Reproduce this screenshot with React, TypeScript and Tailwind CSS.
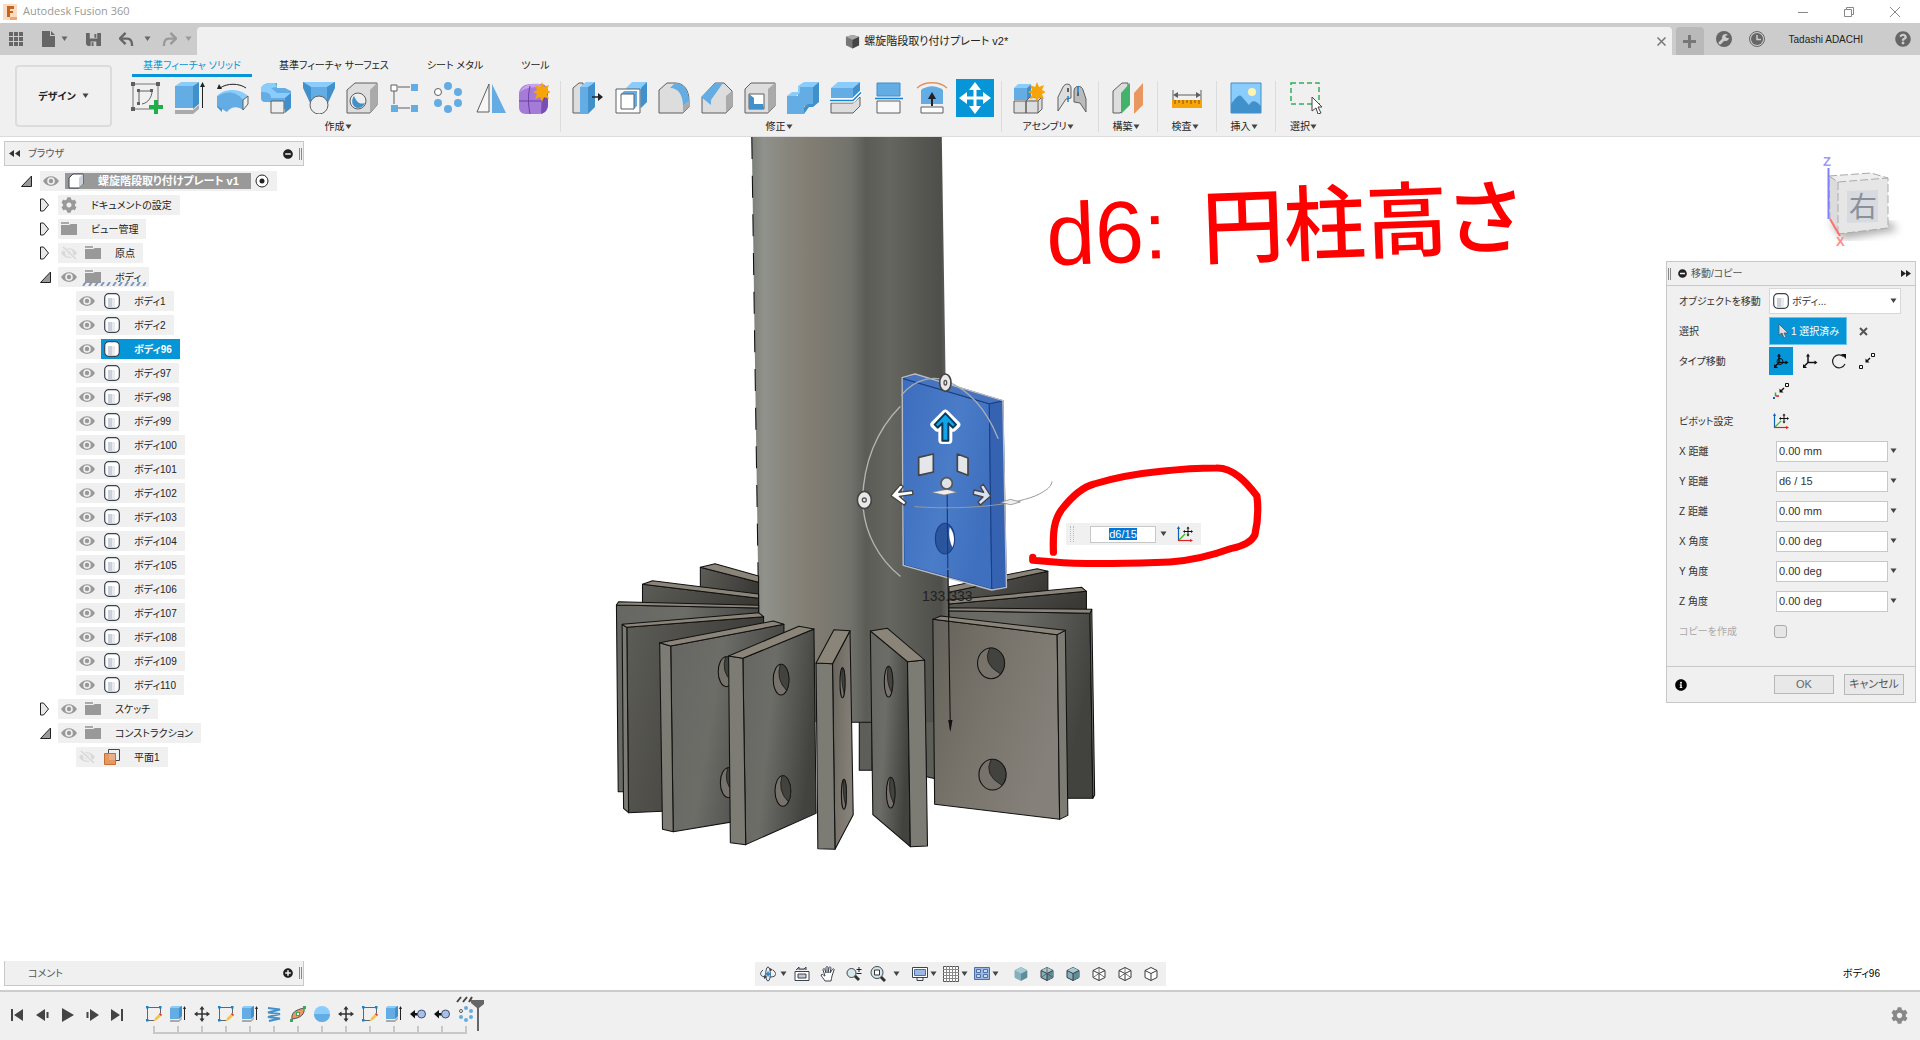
import React, { useEffect, useRef, useState } from 'react';
import { FaCog, FaInfoCircle, FaMinusCircle, FaPlusCircle, FaQuestionCircle } from 'react-icons/fa';

const BLUE = '#64ace4';
const LIGHT = '#8accfc';
const DARK = '#4090cc';
const LINE = '#5f5f5f';

function Svg({ children, size = 32, box = 32 }: { children: React.ReactNode; size?: number; box?: number }) {
  return (
    <svg width={size} height={size} viewBox={`0 0 ${box} ${box}`} fill="none" className="shrink-0" aria-hidden="true">
      {children}
    </svg>
  );
}

function Caret({ className = 'text-[#444]' }: { className?: string }) {
  return (
    <svg width="7" height="6" viewBox="0 0 7 6" className={`shrink-0 ${className}`} aria-hidden="true">
      <path d="M0.500 0.500h6L3.500 5z" fill="currentColor" />
    </svg>
  );
}

/* ---------- ribbon icons ---------- */

const createIcons = [
  {
    label: 'スケッチを作成',
    icon: (
      <Svg>
        <path d="M2 2h25v25H2z" stroke="#777" />
        <path d="M8 22V9h13M21 9c0 6-4 12-10 13" stroke={LINE} />
        <path d="M0 0h4v4H0zM25 0h4v4h-4zM0 25h4v4H0zM6 7h3v3H6zM19 7h3v3h-3zM6 20h3v3H6z" fill={LINE} />
        <path d="M23 18h4v5h5v4h-5v5h-4v-5h-5v-4h5z" fill="#1fae4a" />
      </Svg>
    ),
  },
  {
    label: '押し出し',
    icon: (
      <Svg>
        <path d="M1 4h18v22H1z" fill={BLUE} />
        <path d="M1 4l6-4h18l-6 4z" fill={LIGHT} />
        <path d="M19 4l6-4v22l-6 5z" fill={DARK} />
        <path d="M1 28h18l6-5v4l-6 5H1z" fill="#aaa" />
        <path d="M28.500 26V4" stroke="#222" />
        <path d="M26 5l2.500-5L31 5z" fill="#222" />
      </Svg>
    ),
  },
  {
    label: '回転',
    icon: (
      <Svg>
        <path d="M0 14c7-8 23-8 31 0l-5 5c-6-5-15-5-21 0z" fill={LIGHT} />
        <path d="M0 14l5 5v11l-5-5z" fill={DARK} />
        <path d="M0 15c8-7 20-6 26 3v10c-5-4-12-4-16 2L0 24z" fill={BLUE} />
        <path d="M26 18l5-4v8l-5 6z" fill="#eee" stroke={LINE} />
        <path d="M3 6c7-5 19-5 26 0" stroke="#222" />
        <path d="M0 7l2-5 3 5z" fill="#222" />
      </Svg>
    ),
  },
  {
    label: 'スイープ',
    icon: (
      <Svg>
        <path d="M1 7C2 2 7 1 12 1l5 0v5h8l6 3v14l-5 4H11v-7H5c-3 0-4-2-4-4z" fill={BLUE} />
        <path d="M1 6C3 1 8 1 15 1l2 4-6 1 6 5h14l-6 5H11c0-5-4-6-10-6z" fill={LIGHT} />
        <path d="M25 16l6-5v15l-6 5z" fill={DARK} />
        <path d="M11 19h13v12H11z" fill="#eee" stroke={LINE} />
      </Svg>
    ),
  },
  {
    label: 'ロフト',
    icon: (
      <Svg>
        <path d="M0 0h32v2L23 21H9L0 2z" fill={BLUE} />
        <path d="M0 0h32l-8 5H8z" fill={LIGHT} />
        <path d="M32 0v6l-8 17V5z" fill={DARK} />
        <path d="M0 0l8 5v18L0 6z" fill={DARK} />
        <circle cx="16" cy="23" r="9" fill="#eee" stroke={LINE} />
      </Svg>
    ),
  },
  {
    label: '穴',
    icon: (
      <Svg>
        <path d="M1 8l8-7h22v22l-7 8H1z" fill="#ddd" stroke={LINE} />
        <path d="M24 8l7-7v22l-7 8z" fill="#aaa" />
        <circle cx="12" cy="19" r="8" fill="#eee" stroke={LINE} />
        <path d="M8 14c3 6 5 9 11 7-2 5-7 6-10 4s-4-7-1-11z" fill={DARK} />
      </Svg>
    ),
  },
  {
    label: '矩形状パターン',
    icon: (
      <Svg>
        <path d="M9 5h12M5 9v13M9 26h12" stroke={LINE} />
        <path d="M2 3h6v6H2z" fill="#fff" stroke={LINE} />
        <path d="M22 2h7v7h-7zM2 23h7v7H2zM22 23h7v7h-7z" fill={BLUE} />
      </Svg>
    ),
  },
  {
    label: '円形状パターン',
    icon: (
      <Svg>
        <g fill={BLUE}>
          <circle cx="16" cy="4" r="4" />
          <circle cx="26" cy="10" r="4" />
          <circle cx="26" cy="21" r="4" />
          <circle cx="16" cy="27" r="4" />
          <circle cx="6" cy="21" r="4" />
        </g>
        <circle cx="6" cy="10" r="3.500" fill="#fff" stroke={LINE} />
      </Svg>
    ),
  },
  {
    label: 'ミラー',
    icon: (
      <Svg>
        <path d="M14 2v28H2z" stroke={LINE} fill="#f6f6f6" />
        <path d="M17 2l14 29H17z" fill={BLUE} />
      </Svg>
    ),
  },
  {
    label: 'フォームを作成',
    icon: (
      <Svg>
        <path d="M1 12C1 6 6 2 13 2h10c4 0 7 3 7 8v12c0 6-4 10-9 10H8c-5 0-7-3-7-7z" fill="#a57bd8" />
        <path d="M24 7c3-2 6 0 6 4v11c0 6-3 9-7 10z" fill="#7a4fb5" />
        <path d="M2 10c3-7 10-9 20-8l3 5c-7-3-17-2-23 3z" fill="#c7a5ee" />
        <path d="M12 4c-2 9-2 18 0 28M1 19h23l6-4" stroke="#6a3fa5" />
        <path d="M24 0l2 5 5-2-2 5 4 2-4 2 2 5-5-2-2 5-2-5-5 2 2-5-4-2 4-2-2-5 5 2z" fill="#f7a30a" />
      </Svg>
    ),
  },
];

const modifyIcons = [
  {
    label: 'プレス/プル',
    icon: (
      <Svg>
        <path d="M1 6l6-5h4v30H1z" fill="#ddd" stroke={LINE} />
        <path d="M8 5h8v27H8z" fill={BLUE} />
        <path d="M8 5l6-5h9l-7 5z" fill={LIGHT} />
        <path d="M16 5l7-5v25l-7 7z" fill={DARK} />
        <path d="M20 15h8" stroke="#222" strokeWidth="1.500" />
        <path d="M26 11l5 4-5 4z" fill="#222" />
      </Svg>
    ),
  },
  {
    label: 'オフセット',
    icon: (
      <Svg>
        <path d="M11 6l6-6h15v19l-7 7" fill={LIGHT} />
        <path d="M26 6l6-6v20l-6 6z" fill={DARK} />
        <path d="M1 7h24v24H1z" fill="#fff" stroke={LINE} />
        <path d="M6 12l3-3h13v15l-3 3z" fill={BLUE} />
        <path d="M6 12h13v15H6z" fill="#fff" stroke={LINE} />
      </Svg>
    ),
  },
  {
    label: 'フィレット',
    icon: (
      <Svg>
        <path d="M1 8l8-7h8c9 0 14 7 14 18v6l-6 6H1z" fill="#ddd" stroke={LINE} />
        <path d="M12 6l5-5c9 0 14 8 14 18l-6 5C25 14 21 6 12 6z" fill={BLUE} />
        <path d="M25 24l6-5v6l-6 6z" fill="#aaa" />
      </Svg>
    ),
  },
  {
    label: '面取り',
    icon: (
      <Svg>
        <path d="M1 15L14 1h9l8 8v16l-6 6H1z" fill="#ddd" stroke={LINE} />
        <path d="M25 14l6-5v16l-6 6z" fill="#aaa" />
        <path d="M0 15L14 1h8L10 18v5z" fill={BLUE} />
      </Svg>
    ),
  },
  {
    label: 'シェル',
    icon: (
      <Svg>
        <path d="M1 7l6-6h24v23l-7 7H1z" fill="#ddd" stroke={LINE} />
        <path d="M24 7l7-6v23l-7 7z" fill="#aaa" />
        <path d="M5 12h15v15H5z" fill="#fff" stroke={LINE} />
        <path d="M5 12l5 4v6h9l1 5H5z" fill={DARK} />
      </Svg>
    ),
  },
  {
    label: '結合',
    icon: (
      <Svg>
        <path d="M0 14h11V4h15v20h-9v8H0z" fill={BLUE} />
        <path d="M0 14l5-4h6V4l6-4h15l-6 5H13v6l-4 3z" fill={LIGHT} />
        <path d="M26 5l6-5v20l-6 5h-4l-5 7V25l4-3h5z" fill={DARK} />
      </Svg>
    ),
  },
  {
    label: '面を分割',
    icon: (
      <Svg>
        <path d="M1 6h22v10H1z" fill={BLUE} />
        <path d="M1 6l7-6h22l-7 6z" fill={LIGHT} />
        <path d="M23 6l7-6v10l-7 6z" fill={DARK} />
        <path d="M1 21h22l7-6v9l-7 7H1z" fill="#ddd" stroke={LINE} />
        <path d="M0 18.500h23l8-8" stroke="#fff" strokeWidth="4" />
        <path d="M0 18.500h23l8-8" stroke="#1584d3" strokeWidth="1.500" />
      </Svg>
    ),
  },
  {
    label: 'ボディを分割',
    icon: (
      <Svg>
        <path d="M4 1h23v13H4z" fill={BLUE} stroke={DARK} />
        <path d="M2 16.500h28" stroke="#1584d3" strokeWidth="1.500" />
        <path d="M4 19h23v12H4z" fill="#f8f8f8" stroke={LINE} />
      </Svg>
    ),
  },
  {
    label: '面を置換',
    icon: (
      <Svg>
        <path d="M1 6C9-1 23-1 31 6" stroke="#e2935c" strokeWidth="1.500" />
        <path d="M5 8c7-5 15-5 22 0v14H5z" fill={BLUE} />
        <path d="M5 25h22v6H5z" fill="#fff" stroke={LINE} />
        <path d="M16 24V15" stroke="#222" strokeWidth="2" />
        <path d="M12 17l4-7 4 7z" fill="#222" />
      </Svg>
    ),
  },
  {
    label: '移動/コピー',
    active: true,
    icon: (
      <Svg>
        <path d="M16 3v26M3 16h26" stroke="#fff" strokeWidth="3" />
        <path d="M16 0l6 8H10zM16 32l-6-8h12zM0 16l8-6v12zM32 16l-8 6V10z" fill="#fff" />
      </Svg>
    ),
  },
];

const assembleIcons = [
  {
    label: '新規コンポーネント',
    icon: (
      <Svg>
        <path d="M1 6h13v12H1z" fill={BLUE} />
        <path d="M1 6l4-4h13l-4 4z" fill={LIGHT} />
        <path d="M14 6l4-4v12l-4 4z" fill={DARK} />
        <path d="M1 19h12v12H1zM13 19l4-4h12v12l-4 4H13z" fill="#ddd" stroke={LINE} />
        <path d="M13 19h12v12M25 19l4-4" stroke={LINE} />
        <path d="M24 0l2 5 5-2-2 5 4 2-4 2 2 5-5-2-2 5-2-5-5 2 2-5-4-2 4-2-2-5 5 2z" fill="#f7a30a" />
      </Svg>
    ),
  },
  {
    label: 'ジョイント',
    icon: (
      <Svg>
        <path d="M2 15L7 5c2-4 8-4 8 1v10l-5 1-8 12z" fill="#ddd" stroke={LINE} />
        <path d="M18 9c0-6 8-6 9-1l3 9v13l-6-9-6-1z" fill="#bbb" stroke={LINE} />
        <path d="M12 6v4M22 10v4" stroke={LINE} strokeWidth="2" />
        <path d="M12 14v6M22 4v8" stroke="#1584d3" strokeWidth="1.500" />
      </Svg>
    ),
  },
];

const constructIcon = (
  <Svg>
    <path d="M1 9l9-8h6v22l-8 8H1z" fill="#ddd" stroke={LINE} />
    <path d="M9 11l9-10v22l-9 9z" fill="#43b36c" />
    <path d="M22 11l9-10v22l-9 9z" fill="#e8975f" />
  </Svg>
);

const inspectIcon = (
  <Svg>
    <path d="M2 8v10M30 8v10M4 13h24" stroke={LINE} />
    <path d="M2 13l5-3v6zM30 13l-5-3v6z" fill={LINE} />
    <path d="M1 18h30v8H1z" fill="#f7a30a" />
    <path d="M4 18v4M8 18v3M12 18v4M16 18v3M20 18v4M24 18v3M28 18v4" stroke="#805000" />
  </Svg>
);

const insertIcon = (
  <Svg>
    <path d="M1 1h30v30H1z" fill={LIGHT} stroke={DARK} />
    <path d="M1 22c5-6 8-11 11-7l7 8c3-4 5-6 12 1v7H1z" fill={DARK} />
    <circle cx="22" cy="10" r="4" fill="#fdf3b0" />
  </Svg>
);

const selectIcon = (
  <Svg>
    <path d="M1 1h28v21H1z" stroke="#2fae57" strokeWidth="1.500" strokeDasharray="5 3" />
    <path d="M22 15v14l4-3 2 6 3-1-3-6h4z" fill="#fff" stroke="#444" />
  </Svg>
);

interface Tool {
  label: string;
  icon: React.ReactNode;
  active?: boolean;
}

const groups: { name: string; tools: Tool[] }[] = [
  { name: '作成', tools: createIcons },
  { name: '修正', tools: modifyIcons },
  { name: 'アセンブリ', tools: assembleIcons },
  { name: '構築', tools: [{ label: 'オフセット平面', icon: constructIcon }] },
  { name: '検査', tools: [{ label: '計測', icon: inspectIcon }] },
  { name: '挿入', tools: [{ label: '画像', icon: insertIcon }] },
  { name: '選択', tools: [{ label: '窓選択', icon: selectIcon }] },
];

const tabs = ['基準フィーチャ ソリッド', '基準フィーチャ サーフェス', 'シート メタル', 'ツール'];

/* ---------- browser tree icons ---------- */

function Eye({ off = false }: { off?: boolean }) {
  return (
    <Svg size={16} box={16}>
      <g opacity={off ? 0.25 : 1}>
        <path d="M0 8c4-6.500 12-6.500 16 0-4 6.500-12 6.500-16 0z" fill="#999" />
        <circle cx="8" cy="8" r="3.800" fill="#f0f0f0" />
        <circle cx="8" cy="8" r="2.200" fill="#999" />
      </g>
      {off && <path d="M1 2l14 12" stroke="#f0f0f0" strokeWidth="3" />}
      {off && <path d="M2 2l13 12" stroke="#d8d8d8" strokeWidth="1.500" />}
    </Svg>
  );
}

function Cylinder() {
  return (
    <Svg size={16} box={16}>
      <rect x="0.700" y="0.700" width="14.600" height="14.600" rx="4" fill="#fff" stroke="#3c4350" strokeWidth="1.200" />
      <path d="M4 5h4v9H4z" fill="#ccd0d8" />
      <path d="M8 5h3v9H8z" fill="#e8eaee" />
    </Svg>
  );
}

function Folder() {
  return (
    <Svg size={16} box={16}>
      <path d="M0 1h8v2H0z" fill="#aaa" />
      <path d="M0 4h8l2-1h6v11H0z" fill="#999" />
    </Svg>
  );
}

function Twisty({ open }: { open: boolean }) {
  return (
    <Svg size={14} box={14}>
      {open ? (
        <path d="M10.500 2v10.500H0.500z" fill="#999" stroke="#222" />
      ) : (
        <path d="M0.500 1h3l5 6-5 6h-3z" fill="#e8e8e8" stroke="#222" />
      )}
    </Svg>
  );
}

function TreeFolder({ label, open = false, hidden = false, eye = true, gear = false, active = false }: {
  label: string;
  open?: boolean;
  hidden?: boolean;
  eye?: boolean;
  gear?: boolean;
  active?: boolean;
}) {
  return (
    <li className="flex h-5 items-center pl-9">
      <button aria-label={`${label} を展開`} className="w-[18px]">
        <Twisty open={open} />
      </button>
      <div className="relative flex h-5 items-center bg-[#f0f0f0] pl-[3px] pr-2">
        {eye && (
          <button aria-label="表示" className="mr-2">
            <Eye off={hidden} />
          </button>
        )}
        {gear ? <FaCog size={16} color="#999" /> : <Folder />}
        <span className="ml-3.5">{label}</span>
        {active && (
          <svg className="absolute bottom-px left-6 w-16" height="4" viewBox="0 0 64 4" aria-hidden="true">
            <path d="M1 4l3-4M7 4l3-4M13 4l3-4M19 4l3-4M25 4l3-4M31 4l3-4M37 4l3-4M43 4l3-4M49 4l3-4M55 4l3-4M61 4l3-4" stroke="#7f95b8" strokeWidth="2" />
          </svg>
        )}
      </div>
    </li>
  );
}

const bodies = [1, 2, 96, 97, 98, 99, 100, 101, 102, 103, 104, 105, 106, 107, 108, 109, 110];

function Browser() {
  const [selected, setSelected] = useState(96);

  return (
    <aside className="w-[300px] text-[10px] text-[#222]">
      <div className="flex h-[25px] items-center border border-[#c8c8c8] bg-[#f0f0f0] pl-1 pr-px">
        <svg width="11" height="7" viewBox="0 0 11 7" aria-hidden="true">
          <path d="M5 0v7L0 3.500zM11 0v7L6 3.500z" fill="#333" />
        </svg>
        <h2 className="ml-2 text-[#555]">ブラウザ</h2>
        <button aria-label="最小化" className="ml-auto">
          <FaMinusCircle size={10} color="#222" />
        </button>
        <span className="ml-1.5 h-3 w-[3px] border-x border-[#888]" />
      </div>

      <ul className="mt-[5px] space-y-1">
        <li className="flex h-5 items-center pl-[17px]">
          <button aria-label="展開" className="w-[19px]">
            <Twisty open />
          </button>
          <div className="flex h-5 items-center bg-[#f0f0f0] pl-[3px] pr-2">
            <Eye />
            <div className="ml-1.5 flex h-4 items-center bg-[#999] pl-[3px] pr-3 text-[11px] font-bold text-white">
              <Svg size={16} box={16}>
                <path d="M1 5l4-4h10v10l-4 4H1z" fill="#fff" stroke="#3c4350" strokeLinejoin="round" />
                <path d="M11 5l4-4v10l-4 4z" fill="#ccd0d8" />
              </Svg>
              <span className="ml-3.5">螺旋階段取り付けプレート v1</span>
            </div>
            <span className="ml-1">
              <Svg size={14} box={14}>
                <circle cx="7" cy="7" r="6" stroke="#222" fill="#fff" />
                <circle cx="7" cy="7" r="2.500" fill="#222" />
              </Svg>
            </span>
          </div>
        </li>
        <TreeFolder label="ドキュメントの設定" eye={false} gear />
        <TreeFolder label="ビュー管理" eye={false} />
        <TreeFolder label="原点" hidden />
        <TreeFolder label="ボディ" open active />
        {bodies.map((n) => (
          <li key={n} className="flex h-5 items-center pl-[72px]">
            <button aria-label="表示" className="flex h-5 items-center bg-[#f0f0f0] pl-[3px] pr-1.5">
              <Eye />
            </button>
            <button
              onClick={() => setSelected(n)}
              className={`flex h-5 items-center pl-[3px] pr-2 ${
                n === selected ? 'bg-[#0696d7] font-bold text-white' : 'bg-[#f0f0f0]'
              }`}
            >
              <Cylinder />
              <span className="ml-3.5">ボディ{n}</span>
            </button>
          </li>
        ))}
        <TreeFolder label="スケッチ" />
        <TreeFolder label="コンストラクション" open />
        <li className="flex h-5 items-center pl-[72px]">
          <div className="flex h-5 items-center bg-[#f0f0f0] pl-[3px] pr-2">
            <Eye off />
            <span className="ml-[9px]">
              <Svg size={16} box={16}>
                <path d="M4.500 5V0.500h11v11H12" stroke="#444" />
                <path d="M0.500 4.500h11v11h-11z" fill="#e8975f" stroke="#c56f35" />
                <path d="M5 5h6v6H5z" fill="#e0b090" />
              </Svg>
            </span>
            <span className="ml-3.5">平面1</span>
          </div>
        </li>
      </ul>
    </aside>
  );
}

/* ---------- move / copy dialog ---------- */

function PivotIcon() {
  return (
    <Svg size={16} box={16}>
      <path d="M1.500 1v14" stroke="#0a62b5" strokeWidth="1.200" />
      <path d="M1 14.500h14" stroke="#e02020" strokeWidth="1.200" />
      <path d="M2 14l6-6" stroke="#30b820" strokeWidth="1.200" />
      <path d="M0 3l1.500-3L3 3z" fill="#0a62b5" />
      <path d="M13 13l3 1.500-3 1.500z" fill="#e02020" />
      <path d="M11 2v7M7.500 5.500h7" stroke="#111" />
      <path d="M11 0.500l1.500 2h-3zM11 10.500l-1.500-2h3zM6 5.500L8 4v3zM16 5.500L14 7V4z" fill="#111" />
    </Svg>
  );
}

function AxesIcon({ ring = false }: { ring?: boolean }) {
  return (
    <Svg size={16} box={16}>
      <path d="M6 9.500V2M6 9.500h8M6 9.500L2 13.500" stroke="#111" strokeWidth="1.500" />
      <path d="M4 3.500L6 0.500l2 3zM12.500 7.500l3 2-3 2zM1 11v4h4z" fill="#111" />
      {ring && <ellipse cx="7" cy="8.500" rx="3" ry="3" stroke="#111" />}
    </Svg>
  );
}

function PointsIcon({ small = false }: { small?: boolean }) {
  return (
    <Svg size={16} box={16}>
      <path d="M12.500 0.500h3v3h-3z" stroke="#111" fill="#fff" />
      <path d="M11 5L8 8" stroke="#111" strokeWidth="1.500" />
      <path d="M6.500 5.500v4h4z" fill="#111" />
      {small ? (
        <>
          <path d="M2.500 13V9.500" stroke="#30b820" strokeWidth="1.500" />
          <path d="M2.500 13H6" stroke="#e02020" strokeWidth="1.500" />
          <path d="M0 14h2v2H0z" fill="#0a62b5" />
        </>
      ) : (
        <path d="M0.500 12.500h3v3h-3z" stroke="#111" fill="#fff" />
      )}
    </Svg>
  );
}

const fields = [
  { id: 'x-distance', label: 'X 距離', value: '0.00 mm' },
  { id: 'y-distance', label: 'Y 距離', value: 'd6 / 15' },
  { id: 'z-distance', label: 'Z 距離', value: '0.00 mm' },
  { id: 'x-angle', label: 'X 角度', value: '0.00 deg' },
  { id: 'y-angle', label: 'Y 角度', value: '0.00 deg' },
  { id: 'z-angle', label: 'Z 角度', value: '0.00 deg' },
];

function MoveDialog() {
  return (
    <section className="w-[250px] border border-[#c8c8c8] bg-[#f0f0f0] text-[10px] text-[#333]">
      <div className="flex h-6 items-center border-b border-[#c8c8c8] pl-px pr-1">
        <span className="mr-[7px] h-3 w-[3px] border-x border-[#888]" />
        <FaMinusCircle size={9} color="#222" />
        <h2 className="ml-1 text-[#555]">移動/コピー</h2>
        <svg className="ml-auto" width="10" height="7" viewBox="0 0 10 7" aria-hidden="true">
          <path d="M0 0v7l5-3.500zM5 0v7l5-3.500z" fill="#222" />
        </svg>
      </div>

      <div className="pb-5 pl-3">
        <div className="flex h-[30px] items-center">
          <label htmlFor="target" className="w-[90px]">オブジェクトを移動</label>
          <div className="relative">
            <select id="target" className="h-[26px] w-[132px] appearance-none border border-[#d8d8d8] bg-white pl-[22px] outline-none">
              <option>ボディ...</option>
            </select>
            <span className="pointer-events-none absolute left-1 top-[5px]">
              <Cylinder />
            </span>
            <Caret className="pointer-events-none absolute right-1 top-2.5 text-[#444]" />
          </div>
        </div>
        <div className="flex h-[30px] items-center">
          <span className="w-[90px]">選択</span>
          <button className="flex h-7 w-[78px] items-center border border-[#6bc4ee] bg-[#0696d7] pl-[7px] text-white">
            <Svg size={14} box={14}>
              <path d="M2 0v11l3-2 2 5 2-1-2-4h4z" fill="#ddd" stroke="#555" strokeWidth="0.800" />
            </Svg>
            <span className="whitespace-nowrap">1 選択済み</span>
          </button>
          <button aria-label="選択解除" className="ml-3">
            <Svg size={9} box={9}>
              <path d="M1 1l7 7M8 1L1 8" stroke="#555" strokeWidth="2" />
            </Svg>
          </button>
        </div>
        <div className="flex h-[30px] items-center">
          <span className="w-[90px]">タイプ移動</span>
          <button aria-label="自由移動" className="flex h-7 w-6 items-center justify-center bg-[#0696d7]">
            <AxesIcon ring />
          </button>
          <button aria-label="移動" className="ml-[9px]"><AxesIcon /></button>
          <button aria-label="回転" className="ml-[13px]">
            <Svg size={16} box={16}>
              <path d="M12.500 3.500A6.500 6.500 0 1 0 14 11" stroke="#222" strokeWidth="1.200" />
              <path d="M10 1h5v5z" fill="#111" />
            </Svg>
          </button>
          <button aria-label="点から点へ" className="ml-3"><PointsIcon /></button>
        </div>
        <div className="flex h-[30px] items-center pl-[94px]">
          <button aria-label="点から位置へ"><PointsIcon small /></button>
        </div>
        <div className="flex h-[30px] items-center">
          <span className="w-[94px]">ピボット設定</span>
          <button aria-label="ピボット設定"><PivotIcon /></button>
        </div>
        {fields.map((field) => (
          <div key={field.id} className="flex h-[30px] items-center">
            <label htmlFor={field.id} className="w-[97px]">{field.label}</label>
            <input
              id={field.id}
              type="text"
              defaultValue={field.value}
              className="h-[21px] w-28 border border-[#c8c8c8] bg-white px-0.5 text-[11px] outline-none"
            />
            <Caret className="ml-0.5 text-[#444]" />
          </div>
        ))}
        <div className="flex h-[30px] items-center">
          <label htmlFor="copy" className="w-[95px] text-[#aaa]">コピーを作成</label>
          <input
            id="copy"
            type="checkbox"
            disabled
            className="h-[13px] w-[13px] appearance-none rounded-[3px] border border-[#aaa] bg-[#e6e6e6]"
          />
        </div>
      </div>

      <div className="flex h-9 items-center border-t border-[#c8c8c8] pl-2 pr-[11px]">
        <FaInfoCircle size={12} color="#000" />
        <button className="ml-auto h-[19px] w-[60px] border border-[#b8b8b8] bg-[#e8e8e8] text-[11px] leading-none text-[#666]">OK</button>
        <button className="ml-2.5 h-[21px] w-[60px] border border-[#b8b8b8] bg-[#e8e8e8] text-[11px] leading-none text-[#555]">キャンセル</button>
      </div>
    </section>
  );
}

/* ---------- 3D scene ---------- */

interface Plate {
  face: string;
  side?: string;
  top: string;
  fill: string;
  holes?: number[][];
}

// painted back to front
const plates: Plate[] = [
  { face: '337,682 500,727 500,820 337,820', top: '337,682 378,671 500,708 500,727', fill: 'url(#dark)' },
  { face: '175,733 500,775 500,850 175,850', top: '175,733 203,722 500,762 500,775', fill: 'url(#dark)' },
  { face: '102,795 500,804 500,1300 120,1355 107,1355', top: '102,795 108,785 500,796 500,804', fill: 'url(#plate)' },
  { face: '131,862 514,830 514,1400 136,1418', side: '118,853 131,862 136,1418 122,1405', top: '118,853 500,818 514,830 131,862', fill: 'url(#dark)' },
  { face: '254,918 571,853 571,1420 261,1475', side: '223,908 254,918 261,1475 231,1468', top: '223,908 541,843 571,853 254,918', fill: 'url(#plate)', holes: [[410, 995, 23, 45], [416, 1328, 23, 45]] },
  { face: '456,955 655,867 661,1420 464,1514', side: '416,948 456,955 464,1514 421,1508', top: '416,948 613,859 655,867 456,955', fill: 'url(#plate)', holes: [[563, 1019, 22, 46], [568, 1353, 22, 46]] },
  { face: '707,971 756,872 765,1424 714,1528', side: '661,969 707,971 714,1528 666,1526', top: '661,969 711,869 756,872 707,971', fill: 'url(#warm)', holes: [[735, 1028, 7, 45], [739, 1363, 7, 45]] },
  { face: '813,873 917,965 925,1520 820,1424', side: '917,965 965,960 973,1518 925,1520', top: '813,873 861,865 965,960 917,965', fill: 'url(#plate)', holes: [[864, 1025, 12, 46], [870, 1358, 12, 46]] },
  { face: '1033,757 1310,694 1310,790 1033,820', top: '1033,740 1280,686 1310,694 1033,757', fill: 'url(#dark)' },
  { face: '1033,792 1418,754 1418,830 1033,830', top: '1033,780 1405,742 1418,754 1033,792', fill: 'url(#dark)' },
  { face: '1033,812 1428,820 1436,1375 1040,1375', side: '1428,820 1433,808 1441,1365 1436,1375', top: '1033,803 1433,808 1428,820 1033,812', fill: 'url(#plate)' },
  { face: '988,838 1336,884 1343,1438 993,1393', side: '1336,884 1359,871 1366,1426 1343,1438', top: '988,838 1010,828 1359,871 1336,884', fill: 'url(#warm)', holes: [[1151, 970, 38, 46], [1155, 1304, 38, 46]] },
];

function Scene() {
  return (
    <svg className="pointer-events-none absolute left-[600px] top-0" width="700" height="853" viewBox="600 137 700 853" aria-hidden="true">
      <defs>
        <linearGradient id="tube">
          <stop offset="0" stopColor="#7d7f79" />
          <stop offset="0.060" stopColor="#90928b" />
          <stop offset="0.180" stopColor="#87867d" />
          <stop offset="0.300" stopColor="#827d73" />
          <stop offset="0.500" stopColor="#72726c" />
          <stop offset="0.580" stopColor="#5c5c57" />
          <stop offset="0.700" stopColor="#65665f" />
          <stop offset="0.960" stopColor="#4e4e4a" />
          <stop offset="1" stopColor="#6b6c66" />
        </linearGradient>
        <linearGradient id="plate" x2="1" y2="0.300">
          <stop offset="0" stopColor="#666762" />
          <stop offset="0.450" stopColor="#6c6d67" />
          <stop offset="1" stopColor="#42423f" />
        </linearGradient>
        <linearGradient id="dark" x2="1" y2="0.300">
          <stop offset="0" stopColor="#5d5d57" />
          <stop offset="1" stopColor="#3a3936" />
        </linearGradient>
        <linearGradient id="warm" x2="1" y2="0.500">
          <stop offset="0" stopColor="#65625b" />
          <stop offset="0.500" stopColor="#78746b" />
          <stop offset="1" stopColor="#85817a" />
        </linearGradient>
        <linearGradient id="selected" x2="1" y2="0.400">
          <stop offset="0" stopColor="#3d6dbd" />
          <stop offset="0.600" stopColor="#4a7cc8" />
          <stop offset="1" stopColor="#3f70bf" />
        </linearGradient>
      </defs>

      <g transform="translate(580 340) scale(0.35714 0.33333)" strokeLinejoin="round">
        <path d="M782 1100h36v191h-36zM965 1122l30-6v200l-25-6z" fill="#5d5e58" stroke="#111" strokeWidth="3" />
        <path d="M481-609H1013L1022 0 1033 800V1147H500V800L489 0z" fill="url(#tube)" />
        <path d="M481-609L489 0 500 800" stroke="#111" strokeWidth="3" strokeDasharray="66 50" fill="none" />
        <path d="M700 1147H830" stroke="#111" strokeWidth="3" />
        {plates.map((p) => (
          <g key={p.face} stroke="#111" strokeWidth="3">
            <polygon points={p.face} fill={p.fill} />
            {p.side && <polygon points={p.side} fill="#7c7c75" />}
            <polygon points={p.top} fill="#8a8479" />
            {p.holes?.map(([cx, cy, rx, ry]) => (
              <g key={cy}>
                <ellipse cx={cx} cy={cy} rx={rx} ry={ry} fill="#77736b" />
                <path
                  d={`M${cx - rx * 0.1} ${cy - ry} Q${cx - rx * 0.7} ${cy} ${cx + rx * 0.7} ${cy + ry * 0.7} A${rx} ${ry} 0 0 0 ${cx - rx * 0.1} ${cy - ry}`}
                  fill="#42423e"
                  strokeWidth="2"
                />
              </g>
            ))}
          </g>
        ))}

        <g stroke="#1a3f85" strokeWidth="3">
          <polygon points="902,115 1146,191 1153,748 907,675" fill="url(#selected)" />
          <polygon points="1146,191 1184,182 1194,740 1153,748" fill="#3563b2" />
          <polygon points="902,115 938,103 1184,182 1146,191" fill="#4674be" />
          <ellipse cx="1022" cy="596" rx="27" ry="46" fill="#2b559e" />
        </g>
        <path d="M1035 562c12 15 16 38 8 60-9-18-11-40-8-60z" fill="#fff" />
        <path d="M902 113l36-11 246 80 10 560-41 8-248-74z" fill="none" stroke="#b9bcc4" strokeWidth="4" />
        <path d="M1028 455l2 230" stroke="#15377c" strokeWidth="3" />
        <path d="M1030 690l7 480" stroke="#111" strokeWidth="3" />
        <path d="M1031 1140h12l-6 36z" fill="#111" />
      </g>
      <text x="922" y="601" fontSize="14" fontFamily="Liberation Sans, sans-serif" fill="#222">133.333</text>

      {/* move manipulator */}
      <g transform="translate(840 360) scale(0.33333)" strokeLinejoin="round" strokeLinecap="round">
        <path d="M180 140C110 210 70 310 68 420 70 520 120 600 180 648" stroke="#b5b5b2" strokeWidth="4" fill="none" />
        <path d="M185 105C230 50 290 50 316 62 390 90 440 150 474 235" stroke="#a8adb4" strokeWidth="4" fill="none" />
        <path d="M225 440C400 452 560 430 610 395 628 385 634 375 636 365" stroke="#999" strokeWidth="3" fill="none" />
        <path d="M483 427l28-9 30 8-28 8z" fill="#eee" stroke="#777" strokeWidth="2" />
        <path d="M316 160l34 34-10 10-14-13v50h-20v-50l-14 13-10-10z" stroke="#fff" strokeWidth="22" fill="#fff" />
        <path d="M316 160l32 34-9 9-14-13v52h-18v-52l-14 13-9-9z" fill="#10a5e8" stroke="#073a5c" strokeWidth="6" />
        <path d="M236 292l44-10v54l-44 10zM352 282l32 12v52l-32-12z" fill="#e4e6ea" stroke="#444" strokeWidth="5" />
        <path d="M275 397l46-9 30 9-38 8z" fill="#eee" stroke="#777" strokeWidth="2" />
        <circle cx="320" cy="370" r="17" fill="#dfe2e6" stroke="#555" strokeWidth="5" />
        <path d="M153 407l29-34 8 7-14 17 41-5 2 11-41 6 20 18-5 9z" fill="#fff" stroke="#444" strokeWidth="4" />
        <path d="M452 408l-22-35-9 7 10 17-29-7-2 13 29 8-15 15 7 9z" fill="#d8e2f2" stroke="#444" strokeWidth="4" />
        <ellipse cx="316" cy="68" rx="17" ry="26" fill="#e8e8e8" stroke="#444" strokeWidth="5" />
        <ellipse cx="316" cy="68" rx="4" ry="7" stroke="#555" strokeWidth="4" fill="none" />
        <ellipse cx="73" cy="420" rx="21" ry="26" fill="#e8e8e8" stroke="#444" strokeWidth="5" />
        <circle cx="73" cy="420" r="6" stroke="#555" strokeWidth="4" fill="none" />
      </g>

      <path
        transform="translate(1020 150) scale(0.34435 0.33333)"
        d="M97 1207C95 1140 100 1110 120 1080 150 1040 185 1010 215 1002 270 985 350 970 410 964 470 957 520 954 570 954 620 952 660 1000 688 1038 692 1070 692 1110 682 1155 670 1180 640 1190 615 1195 570 1212 500 1232 435 1236 350 1240 180 1244 100 1236L37 1231V1222"
        fill="none"
        stroke="#f00"
        strokeWidth="21"
        strokeLinecap="round"
        strokeLinejoin="round"
      />
    </svg>
  );
}

function ViewCube() {
  return (
    <svg width="90" height="100" viewBox="1815 150 90 100" role="img" aria-label="ViewCube" className="absolute right-[15px] top-[13px]">
      <defs>
        <filter id="soft">
          <feGaussianBlur stdDeviation="4" />
        </filter>
      </defs>
      <path d="M1830 222l60 0 8 8-55 9z" fill="#aaa" filter="url(#soft)" />
      <path d="M1829 176l9 5v53l-8-15z" fill="#dcdcdc" />
      <path d="M1829 176l42-3 17 5-50 4z" fill="#eee" />
      <path d="M1838 182l50-4v50l-50 6z" fill="#e6e6e6" />
      <path d="M1829 176l42-3 17 5v50l-50 6-8-15zM1829 176l9 6 50-4M1838 182v52" fill="none" stroke="#aaa" strokeDasharray="8 3" />
      <path d="M1847 191l31-1v32l-31 1z" fill="#d7dadf" />
      <text x="1849" y="217" fontSize="28" fontFamily="Noto Sans CJK JP, sans-serif" fill="#8a9099">右</text>
      <path d="M1828.500 168v51" stroke="#8080ff" strokeWidth="2" />
      <path d="M1830 219l10 17" stroke="#ff7070" strokeWidth="2" />
      <text x="1823" y="166" fontSize="13" fontFamily="Liberation Sans, sans-serif" fontWeight="bold" fill="#9a9aff">Z</text>
      <text x="1836" y="246" fontSize="13" fontFamily="Liberation Sans, sans-serif" fontWeight="bold" fill="#ff8a8a">X</text>
    </svg>
  );
}

function InlineValue() {
  const ref = useRef<HTMLInputElement>(null);

  useEffect(() => {
    ref.current?.focus();
    ref.current?.select();
  }, []);

  return (
    <div className="absolute left-[1066px] top-[386px] flex h-[22px] w-[135px] items-center bg-[#f0f0f0]">
      <span className="ml-1 h-4 w-1 border-x border-dotted border-[#bbb]" />
      <input
        ref={ref}
        type="text"
        aria-label="距離"
        defaultValue="d6/15"
        className="ml-4 h-[17px] w-[66px] border border-[#c8c8c8] bg-white text-center text-[11px] outline-none selection:bg-[#0078d7] selection:text-white"
      />
      <Caret className="ml-1 text-[#444]" />
      <button aria-label="ピボット設定" className="ml-2.5">
        <PivotIcon />
      </button>
    </div>
  );
}

/* ---------- navigation bar ---------- */

function Cube({ fill, edges, back }: { fill?: string; edges?: boolean; back?: boolean }) {
  return (
    <Svg size={14} box={14}>
      <path d="M7 0.500l6 3v7l-6 3-6-3v-7z" fill={fill ?? '#fff'} stroke={edges ? '#3a3a3a' : fill} />
      {fill && <path d="M7 6.500l6-3v7l-6 3z" fill="#5f8c99" />}
      {fill && <path d="M7 0.500l6 3-6 3-6-3z" fill="#a6cbd6" />}
      {edges && <path d="M1 3.500l6 3 6-3M7 6.500v7" stroke="#3a3a3a" />}
      {back && <path d="M7 0.500v6M1 10.500l6-4 6 4" stroke="#555" strokeWidth="0.800" />}
    </Svg>
  );
}

function NavBar() {
  return (
    <div className="flex h-6 items-center bg-[#f0f0f0] px-0.5">
      <button aria-label="オービット" className="flex w-8 items-center gap-1 pl-[3px]">
        <Svg size={16} box={16}>
          <path d="M8 1c3 0 3 14 0 14S5 1 8 1zM3 4c-4 3-3 7 3 7M10 11c7 0 7-4 3-7" stroke="#3c4350" />
          <path d="M8 5.500v5M5.500 8h5" stroke="#1584d3" strokeWidth="1.500" />
          <path d="M4 9l3 2-3 2zM10 2l3 2-3 1z" fill="#3c4350" />
        </Svg>
        <Caret />
      </button>
      <button aria-label="ビュー正面" className="flex w-[26px] justify-center">
        <Svg size={16} box={16}>
          <path d="M1 5.500h14v9H1z" fill="#fff" stroke="#3c4350" />
          <path d="M4 8h8v4H4z" fill="#c5c9d0" stroke="#3c4350" />
          <path d="M2 4l3-3v2h5l2-2v3" stroke="#3c4350" fill="#aab" />
        </Svg>
      </button>
      <button aria-label="画面移動" className="flex w-[26px] justify-center">
        <Svg size={16} box={16}>
          <path d="M5 15c-1-2-4-5-4-6 1-2 3 1 4 1L3 4c0-2 2-2 2 0l1 3V2c0-2 2-2 2 0v5l1-5c0-2 2-1 2 0l-1 5 2-3c1-2 3-1 2 0l-2 6c0 2-1 3-1 5z" fill="#fff" stroke="#3c4350" />
        </Svg>
      </button>
      <button aria-label="ズーム" className="flex w-[26px] justify-center">
        <Svg size={16} box={16}>
          <circle cx="5.500" cy="7" r="4.500" fill="#d5e8ee" stroke="#444" />
          <path d="M9 10l4 4" stroke="#333" strokeWidth="3" />
          <path d="M13 1v5M10.500 3.500h5M10.500 7.500h5" stroke="#222" />
        </Svg>
      </button>
      <button aria-label="フィット" className="flex w-9 items-center gap-[7px] pl-[3px]">
        <Svg size={16} box={16}>
          <circle cx="7" cy="6.500" r="6" fill="#d5e8ee" stroke="#444" />
          <path d="M4.500 4h5v5h-5z" fill="#fff" stroke="#333" />
          <path d="M11 11l4 4" stroke="#333" strokeWidth="3" />
        </Svg>
        <Caret />
      </button>
      <button aria-label="表示設定" className="ml-1.5 flex w-[31px] items-center gap-0.5 pl-[3px]">
        <Svg size={16} box={16}>
          <path d="M0.500 1.500h15v10h-15z" fill="#fff" stroke="#3c4350" />
          <path d="M2.500 3.500h11v6h-11z" fill="#9cb9e6" stroke="#4f6ea5" />
          <path d="M5 12v2.500h6V12" stroke="#3c4350" />
        </Svg>
        <Caret />
      </button>
      <button aria-label="グリッド" className="flex w-[31px] items-center gap-0.5 pl-[3px]">
        <Svg size={16} box={16}>
          <path d="M0.500 0.500h15v15h-15z" fill="#fff" stroke="#555" />
          <path d="M3.500 0v16M6.500 0v16M9.500 0v16M12.500 0v16M0 3.500h16M0 6.500h16M0 9.500h16M0 12.500h16" stroke="#888" />
        </Svg>
        <Caret />
      </button>
      <button aria-label="ビューポート" className="flex w-[31px] items-center gap-0.5 pl-[3px]">
        <Svg size={16} box={16}>
          <path d="M0.500 1.500h15v12h-15z" fill="#9cb9e6" stroke="#4f6ea5" />
          <path d="M2.500 3.500h4v3h-4zM9.500 3.500h4v3h-4zM2.500 8.500h4v3h-4zM9.500 8.500h4v3h-4z" fill="#c8dcf6" stroke="#4f6ea5" />
        </Svg>
        <Caret />
      </button>
      <div className="ml-1.5 flex">
        <button aria-label="シェーディング" className="flex w-[26px] justify-center"><Cube fill="#84afbc" /></button>
        <button aria-label="隠線付き" className="flex w-[26px] justify-center"><Cube fill="#84afbc" edges back /></button>
        <button aria-label="エッジ付き" className="flex w-[26px] justify-center"><Cube fill="#84afbc" edges /></button>
        <button aria-label="ワイヤフレーム" className="flex w-[26px] justify-center"><Cube edges back /></button>
        <button aria-label="隠線ワイヤ" className="flex w-[26px] justify-center"><Cube edges back /></button>
        <button aria-label="表示エッジ" className="flex w-[26px] justify-center"><Cube edges /></button>
      </div>
    </div>
  );
}

/* ---------- timeline ---------- */

const timelineIcons: Record<string, React.ReactNode> = {
  sketch: (
    <>
      <path d="M1.500 1.500h13v6M1.500 1.500v13h7" stroke="#666" />
      <path d="M0 0h2.500v2.500H0zM13 0h2.500v2.500H13zM0 13h2.500v2.500H0z" fill="#1584d3" />
      <path d="M8 15l1-3 4-4 2 2-4 4z" fill="#f6c444" />
      <path d="M13 8l1-1 2 2-1 1z" fill="#e02020" />
    </>
  ),
  extrude: (
    <>
      <path d="M0 2l2-2h10v10l-3 3H0z" fill={BLUE} />
      <path d="M0 2l2-2h10L9 2z" fill={LIGHT} />
      <path d="M9 2l3-2v10l-3 3z" fill={DARK} />
      <path d="M0 14h9l3-3v2l-3 3H0z" fill="#aaa" />
      <path d="M14.500 14V2" stroke="#222" />
      <path d="M13 3l1.500-3L16 3z" fill="#222" />
    </>
  ),
  move: (
    <>
      <path d="M8 2v12M2 8h12" stroke="#333" strokeWidth="1.500" />
      <path d="M8 0l2.500 3.500h-5zM8 16l-2.500-3.500h5zM0 8l3.500-2.500v5zM16 8l-3.500 2.500v-5z" fill="#333" />
    </>
  ),
  coil: <path d="M2 2l12 1.500L2 6.500 14 8 2 11l12 1.500L3 15" stroke={DARK} strokeWidth="2" />,
  surface: (
    <>
      <path d="M2 13C1 7 5 4 14 2c1 6-3 10-12 11z" fill="#e8975f" stroke="#555" />
      <path d="M0 13h3v3H0zM13 0h3v3h-3zM6 6h4v4H6z" fill="#2fae57" />
      <path d="M7 7h2v2H7z" fill="#fff" />
    </>
  ),
  sphere: (
    <>
      <circle cx="8" cy="8" r="8" fill={LIGHT} />
      <path d="M0 8h16a8 8 0 0 1-16 0z" fill={BLUE} />
    </>
  ),
  remove: (
    <>
      <path d="M0 8l5-4v3h4v2.500H5v3z" fill="#111" />
      <circle cx="11.500" cy="8" r="4" fill="#a9bfe6" stroke="#3c4f78" />
    </>
  ),
  pattern: (
    <>
      <g fill={BLUE}>
        <circle cx="8" cy="2" r="2" />
        <circle cx="13" cy="5" r="2" />
        <circle cx="13" cy="11" r="2" />
        <circle cx="8" cy="14" r="2" />
        <circle cx="3" cy="11" r="2" />
      </g>
      <circle cx="3" cy="5" r="1.500" fill="#fff" stroke="#555" />
    </>
  ),
};

const steps = [
  'sketch', 'extrude', 'move', 'sketch', 'extrude', 'coil', 'surface',
  'sphere', 'move', 'sketch', 'extrude', 'remove', 'remove', 'pattern',
];

const playback = [
  { label: '先頭へ', d: 'M0 1h2v12H0zM12 1v12L3 7z' },
  { label: '前へ', d: 'M9 1v12L0 7zM10.500 4h2v6h-2z' },
  { label: '再生', d: 'M1 0l12 7-12 7z' },
  { label: '次へ', d: 'M4 1v12l9-6zM0.500 4h2v6h-2z' },
  { label: '末尾へ', d: 'M0 1v12l9-6zM10 1h2v12h-2z' },
];

function Timeline() {
  return (
    <footer className="flex h-[50px] items-start border-t-2 border-[#ccc] bg-[#f0f0f0] pl-[5px] pr-3">
      <div className="mt-[11px] flex">
        {playback.map((item) => (
          <button key={item.label} aria-label={item.label} className="flex h-6 w-[25px] items-center justify-center">
            <svg width="13" height="14" viewBox="0 0 13 14" aria-hidden="true">
              <path d={item.d} fill="#444" />
            </svg>
          </button>
        ))}
      </div>
      <div className="relative ml-3 mt-3.5">
        <ol className="flex">
          {steps.map((step, i) => (
            <li key={i} className="flex w-6 flex-col items-center">
              <button aria-label={step}>
                <Svg size={16} box={16}>{timelineIcons[step]}</Svg>
              </button>
              <span className="mt-1 h-1.5 w-0.5 bg-[#c8c8c8]" />
            </li>
          ))}
        </ol>
        <div className="mx-[11px] h-0.5 bg-[#c8c8c8]" />
        <svg className="absolute -right-1.5 -top-2.5" width="28" height="36" viewBox="0 0 28 36" aria-hidden="true">
          <path d="M1 6l4-5M7 6l4-5M13 6l3-5" stroke="#444" strokeWidth="2" />
          <path d="M15 4h13v4l-5 4v23h-2V12l-6-5z" fill="#666" />
        </svg>
      </div>
      <button aria-label="設定" className="ml-auto mt-[15px]">
        <FaCog size={17} color="#888" />
      </button>
    </footer>
  );
}

/* ---------- top bars ---------- */

function TitleBar() {
  return (
    <header className="flex h-[23px] items-center bg-white pl-0.5 text-[#999]">
      <Svg size={16} box={16}>
        <path d="M1 0h14v16H1z" fill="#fbdcc2" />
        <path d="M5 2h7v3H8v2h3v2H8v4H5z" fill="#c4661f" />
        <path d="M8 13h7v3H8z" fill="#f0a870" />
      </Svg>
      <h1 className="ml-[5px] font-['Open_Sans',sans-serif] text-[11px]">Autodesk Fusion 360</h1>
      <div className="ml-auto mr-0.5 flex">
        <button aria-label="最小化" className="flex w-[46px] justify-center"><Svg size={10} box={10}><path d="M0 5.500h10" stroke="#888" /></Svg></button>
        <button aria-label="元に戻す" className="flex w-[46px] justify-center"><Svg size={10} box={10}><path d="M0.500 2.500h7v7h-7zM2.500 2.500v-2h7v7h-2" stroke="#888" /></Svg></button>
        <button aria-label="閉じる" className="flex w-[46px] justify-center"><Svg size={10} box={10}><path d="M0 0l10 10M10 0L0 10" stroke="#888" /></Svg></button>
      </div>
    </header>
  );
}

function DocumentBar() {
  return (
    <div className="flex h-8 bg-[#ccc]">
      <div className="flex w-[197px] items-center pl-[9px] text-[#666]">
        <button aria-label="データパネル">
          <Svg size={14} box={14}>
            <path d="M0 0h4v4H0zM5 0h4v4H5zM10 0h4v4h-4zM0 5h4v4H0zM5 5h4v4H5zM10 5h4v4h-4zM0 10h4v4H0zM5 10h4v4H5zM10 10h4v4h-4z" fill="#666" />
          </Svg>
        </button>
        <button aria-label="ファイル" className="ml-[18px] flex items-center gap-1">
          <Svg size={16} box={16}>
            <path d="M1 0h8v5h5v11H1zM10 0l4 4h-4z" fill="#666" />
          </Svg>
          <Caret className="text-[#666]" />
        </button>
        <button aria-label="保存" className="ml-[18px]">
          <Svg size={15} box={16}>
            <path d="M0 1h16v14H2l-2-2z" fill="#666" />
            <path d="M4 1h8v6H4zM5 10h6v5H5z" fill="#ccc" />
            <path d="M9 2h2v4H9zM6 11h2v4H6z" fill="#666" />
          </Svg>
        </button>
        <button aria-label="元に戻す" className="ml-[18px] flex items-center gap-2.5">
          <Svg size={15} box={16}>
            <path d="M2 7h7c4 0 5 3 5 8" stroke="#666" strokeWidth="2.500" />
            <path d="M7 1L1 7l6 6" stroke="#666" strokeWidth="2.500" />
          </Svg>
          <Caret className="text-[#666]" />
        </button>
        <button aria-label="やり直し" className="ml-[11px] flex items-center gap-2">
          <Svg size={15} box={16}>
            <path d="M14 7H7c-4 0-5 3-5 8" stroke="#999" strokeWidth="2.500" />
            <path d="M9 1l6 6-6 6" stroke="#999" strokeWidth="2.500" />
          </Svg>
          <Caret className="text-[#999]" />
        </button>
      </div>
      <div className="mt-1 flex flex-1 items-center rounded-t bg-[#f0f0f0] pr-1.5">
        <div className="flex flex-1 items-center justify-center gap-1">
          <Svg size={15} box={16}>
            <path d="M1 3l7-2 7 2v9l-7 3.500L1 12z" fill="#777" />
            <path d="M8 6l7-3v9l-7 3.500z" fill="#444" />
            <path d="M1 3l7-2 7 2-7 3z" fill="#aaa" />
          </Svg>
          <span className="text-[11px] text-[#222]">螺旋階段取り付けプレート v2*</span>
        </div>
        <button aria-label="タブを閉じる">
          <Svg size={9} box={9}><path d="M0.500 0.500l8 8M8.500 0.500l-8 8" stroke="#777" strokeWidth="1.500" /></Svg>
        </button>
      </div>
      <button aria-label="新規デザイン" className="ml-1 mt-1 flex w-7 items-center justify-center rounded-t bg-[#b9b9b9]">
        <Svg size={13} box={13}><path d="M6.500 0v13M0 6.500h13" stroke="#777" strokeWidth="3" /></Svg>
      </button>
      <div className="flex items-center pl-3 pr-[9px]">
        <button aria-label="ジョブの状態">
          <Svg size={16} box={16}>
            <circle cx="8" cy="8" r="8" fill="#666" />
            <path d="M4 12l5-5" stroke="#ccc" strokeWidth="3" strokeLinecap="round" />
            <path d="M12 4a3.500 3.500 0 1 0 1 3l-3 0-1-2z" fill="#ccc" />
          </Svg>
        </button>
        <button aria-label="履歴" className="ml-[17px]">
          <Svg size={16} box={16}>
            <circle cx="8" cy="8" r="7.500" stroke="#666" />
            <circle cx="8" cy="8" r="6" fill="#666" />
            <path d="M8 4v4.500h4" stroke="#ccc" strokeWidth="1.500" />
          </Svg>
        </button>
        <button className="ml-6 mr-8 text-[10px] text-[#222]">Tadashi ADACHI</button>
        <button aria-label="ヘルプ"><FaQuestionCircle size={16} color="#666" /></button>
      </div>
    </div>
  );
}

function Ribbon() {
  const [tab, setTab] = useState(tabs[0]);

  return (
    <div className="flex h-[82px] border-b border-[#dcdcdc] bg-[#f0f0f0] text-[10px] text-[#222]">
      <button className="ml-[15px] mt-2.5 flex h-[62px] w-[97px] items-center justify-center gap-1.5 rounded border-2 border-[#dcdcdc] font-bold">
        デザイン <Caret />
      </button>
      <div className="ml-2">
        <div className="flex h-[26px] items-start gap-4 pl-3">
          {tabs.map((name) => (
            <button
              key={name}
              onClick={() => setTab(name)}
              className={`h-[22px] whitespace-nowrap border-b-3 px-[11px] pt-0.5 ${
                name === tab ? 'border-[#0696d7] text-[#0696d7]' : 'border-transparent'
              }`}
            >
              {name}
            </button>
          ))}
        </div>
        <div className="flex">
          {groups.map((group) => (
            <div key={group.name} className="flex h-[51px] min-w-[59px] flex-col items-center border-r border-[#dcdcdc] px-[5px] last:border-0">
              <div className="-mt-0.5 flex">
                {group.tools.map((tool) => (
                  <div key={tool.label} className="flex w-[43px] justify-center">
                    <button
                      aria-label={tool.label}
                      className={`flex h-[38px] w-[38px] items-center justify-center ${tool.active ? 'bg-[#0696d7]' : ''}`}
                    >
                      {tool.icon}
                    </button>
                  </div>
                ))}
              </div>
              <button className="mt-[3px] flex items-center whitespace-nowrap pr-1 leading-[14px]">
                {group.name} <Caret />
              </button>
            </div>
          ))}
        </div>
      </div>
    </div>
  );
}

export default function App() {
  return (
    <div className="flex min-h-screen flex-col bg-white font-['Liberation_Sans','Noto_Sans_CJK_JP',sans-serif] [font-feature-settings:'palt']">
      <TitleBar />
      <DocumentBar />
      <Ribbon />

      <main className="relative flex flex-1 flex-col overflow-hidden pt-1">
        <Scene />
        <p className="absolute left-[1046px] top-[46px] flex -rotate-2 items-center whitespace-nowrap leading-none text-[#f00]">
          <span className="text-[88px]">d6</span>
          <span className="w-[58px] text-[80px]">:</span>
          <span className="text-[82px] font-medium">円柱高さ</span>
        </p>
        <InlineValue />
        <ViewCube />

        <div className="pointer-events-none relative flex flex-1 items-start justify-between px-1 [&>*]:pointer-events-auto">
          <Browser />
          <div className="mt-[120px]">
            <MoveDialog />
          </div>
        </div>

        <div className="relative mb-1 grid grid-cols-[1fr_auto_1fr] items-center px-1 text-[10px]">
          <div className="flex h-[25px] w-[300px] items-center border border-t-0 border-[#c8c8c8] bg-[#f0f0f0] pl-[23px] pr-px text-[#555]">
            コメント
            <button aria-label="コメントを追加" className="ml-auto">
              <FaPlusCircle size={10} color="#222" />
            </button>
            <span className="ml-1.5 h-3 w-[3px] border-x border-[#888]" />
          </div>
          <NavBar />
          <p className="pr-9 text-right text-black">ボディ96</p>
        </div>
      </main>

      <Timeline />
    </div>
  );
}
